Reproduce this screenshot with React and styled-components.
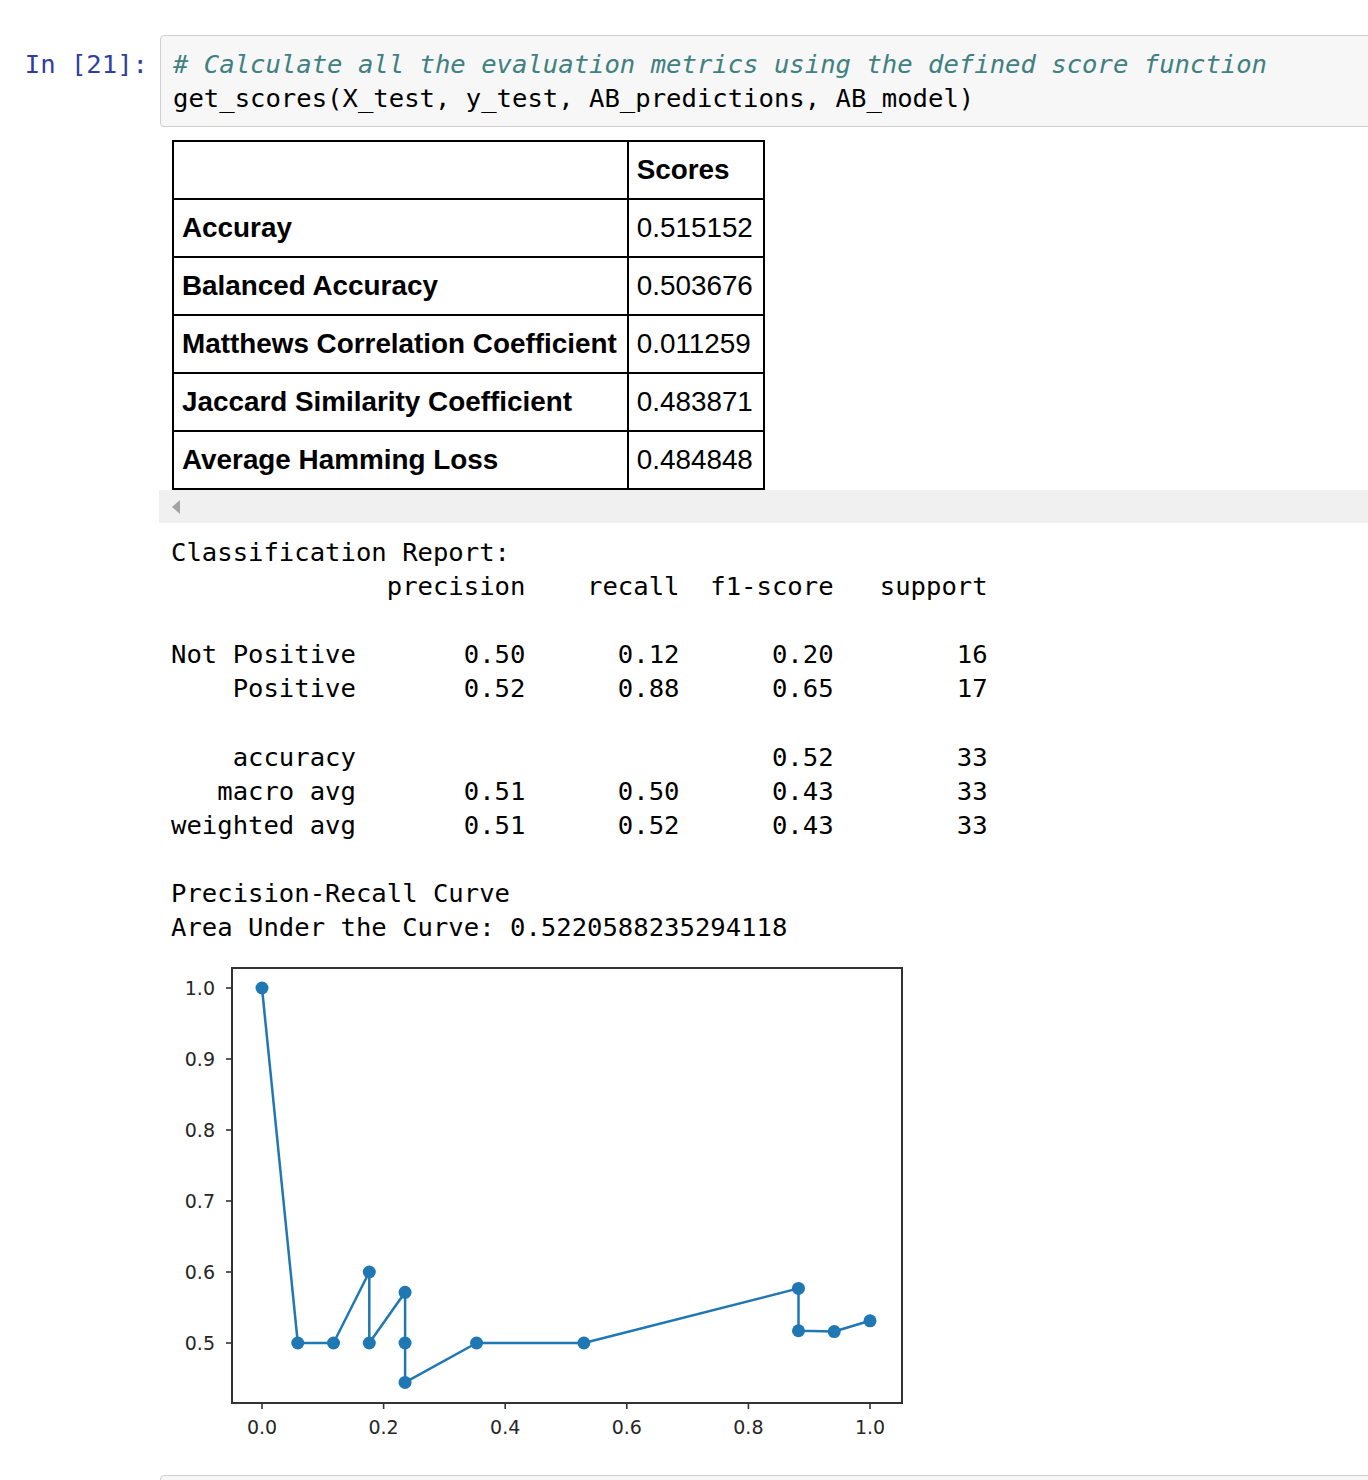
import React from 'react'
import styled, { createGlobalStyle } from 'styled-components'

const mono = `"DejaVu Sans Mono", "Liberation Mono", monospace`

const GlobalStyle = createGlobalStyle`
  body {
    margin: 0;
    background: #fff;
  }
`

const Notebook = styled.div`
  padding-top: 35px;
  overflow: hidden;
  width: 100%;
`

const InputRow = styled.div`
  display: flex;
  align-items: flex-start;
`

const Prompt = styled.div`
  flex: 0 0 160px;
  box-sizing: border-box;
  padding: 12px 12px 0 0;
  text-align: right;
  font-family: ${mono};
  font-size: 25.6px;
  line-height: 34px;
  color: #303f9f;
  white-space: pre;
`

const CodeBox = styled.div`
  flex: 1 0 auto;
  margin-right: -12px;
  background: #f7f7f7;
  border: 1px solid #cfcfcf;
  border-radius: 4px;
  padding: 11px 12px;
  font-family: ${mono};
  font-size: 25.6px;
  line-height: 34px;
  color: #000;
  white-space: pre;
`

const Comment = styled.span`
  color: #408080;
  font-style: italic;
`

const Output = styled.div`
  margin-left: 159px;
`

const TableScroll = styled.div`
  padding: 13px 0 0 13px;
`

const Table = styled.table`
  border-collapse: collapse;
  font-family: "Liberation Sans", Arial, sans-serif;
  font-size: 27.85px;
  color: #000;
`

const Cell = styled.td`
  border: 2px solid #000;
  height: 56px;
  padding: 0 10px 0 8px;
  line-height: 1;
  text-align: left;
  white-space: nowrap;
  font-weight: ${p => (p.$head ? 700 : 400)};
`

const Scrollbar = styled.div`
  height: 33px;
  background: #f0f0f0;
  display: flex;
  align-items: center;
  padding-left: 13px;
`

const Arrow = styled.span`
  width: 0;
  height: 0;
  border-top: 7.5px solid transparent;
  border-bottom: 7.5px solid transparent;
  border-right: 8px solid #a3a3a3;
`

const Pre = styled.pre`
  margin: 12px 0 0 12px;
  font-family: ${mono};
  font-size: 25.6px;
  line-height: 34.1px;
  color: #000;
`

const Chart = styled.svg`
  display: block;
  margin: 6px 0 0 12px;
`

const NextCell = styled.div`
  margin: 15px -12px 0 160px;
  height: 60px;
  background: #f7f7f7;
  border: 1px solid #cfcfcf;
  border-radius: 4px;
`

const scores = [
  ['Accuray', '0.515152'],
  ['Balanced Accuracy', '0.503676'],
  ['Matthews Correlation Coefficient', '0.011259'],
  ['Jaccard Similarity Coefficient', '0.483871'],
  ['Average Hamming Loss', '0.484848'],
]

const report = `Classification Report:
              precision    recall  f1-score   support

Not Positive       0.50      0.12      0.20        16
    Positive       0.52      0.88      0.65        17

    accuracy                           0.52        33
   macro avg       0.51      0.50      0.43        33
weighted avg       0.51      0.52      0.43        33

Precision-Recall Curve
Area Under the Curve: 0.5220588235294118`

// recall, precision
const curve = [
  [0, 1], [1 / 17, 0.5], [2 / 17, 0.5], [3 / 17, 0.6], [3 / 17, 0.5],
  [4 / 17, 4 / 7], [4 / 17, 0.5], [4 / 17, 4 / 9], [6 / 17, 0.5],
  [9 / 17, 0.5], [15 / 17, 15 / 26], [15 / 17, 15 / 29], [16 / 17, 16 / 31],
  [1, 17 / 32],
]

const px = r => 91 + 608 * r
const py = p => 393 - (p - 0.5) * 710

function PRChart() {
  const pts = curve.map(([r, p]) => `${px(r).toFixed(1)},${py(p).toFixed(1)}`).join(' ')
  const yTicks = [0.5, 0.6, 0.7, 0.8, 0.9, 1.0]
  const xTicks = [0, 0.2, 0.4, 0.6, 0.8, 1.0]
  const label = { fontFamily: '"DejaVu Sans", sans-serif', fontSize: 19, fill: '#262626' }
  return (
    <Chart width="740" height="510" viewBox="0 0 740 510">
      <rect x="61" y="18" width="670" height="435" fill="#fff" stroke="#333" strokeWidth="2" />
      {yTicks.map(t => (
        <g key={t}>
          <line x1="55" x2="61" y1={py(t)} y2={py(t)} stroke="#333" strokeWidth="1.6" />
          <text x="44" y={py(t) + 7} textAnchor="end" {...label}>{t.toFixed(1)}</text>
        </g>
      ))}
      {xTicks.map(t => (
        <g key={t}>
          <line x1={px(t)} x2={px(t)} y1="453" y2="459" stroke="#333" strokeWidth="1.6" />
          <text x={px(t)} y="484" textAnchor="middle" {...label}>{t.toFixed(1)}</text>
        </g>
      ))}
      <polyline points={pts} fill="none" stroke="#1f77b4" strokeWidth="2.5" strokeLinejoin="round" />
      {curve.map(([r, p], i) => (
        <circle key={i} cx={px(r)} cy={py(p)} r="6.5" fill="#1f77b4" />
      ))}
    </Chart>
  )
}

export default function App() {
  return (
    <Notebook>
      <GlobalStyle />
      <InputRow>
        <Prompt>In [21]:</Prompt>
        <CodeBox>
          <Comment># Calculate all the evaluation metrics using the defined score function</Comment>
          {'\n'}get_scores(X_test, y_test, AB_predictions, AB_model)
        </CodeBox>
      </InputRow>
      <Output>
        <TableScroll>
          <Table>
            <thead>
              <tr>
                <Cell as="th" $head></Cell>
                <Cell as="th" $head>Scores</Cell>
              </tr>
            </thead>
            <tbody>
              {scores.map(([name, val]) => (
                <tr key={name}>
                  <Cell as="th" $head>{name}</Cell>
                  <Cell>{val}</Cell>
                </tr>
              ))}
            </tbody>
          </Table>
        </TableScroll>
        <Scrollbar>
          <Arrow />
        </Scrollbar>
        <Pre>{report}</Pre>
        <PRChart />
      </Output>
      <NextCell />
    </Notebook>
  )
}
